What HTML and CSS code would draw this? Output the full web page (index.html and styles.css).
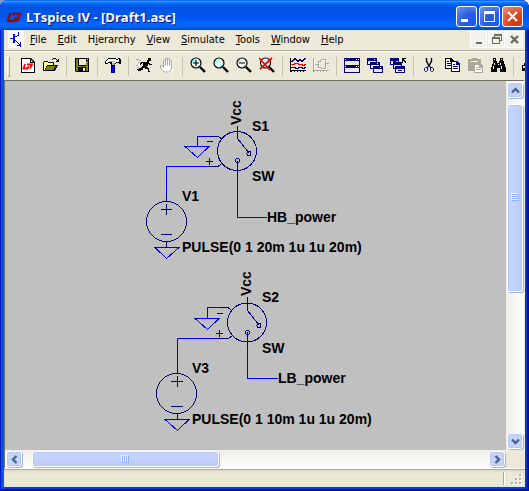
FILE: index.html
```html
<!DOCTYPE html>
<html lang="en">
<head>
<meta charset="utf-8">
<title>LTspice IV - [Draft1.asc]</title>
<link rel="stylesheet" href="styles.css">
</head>
<body>
<div class="window">
  <header class="titlebar">
    <svg class="app-logo" width="16" height="16" viewBox="0 0 16 16" aria-hidden="true">
      <path d="M4.500 3L2 11H8.500L10 7M6.500 4H14L11 11.500" fill="none" stroke="#8c0c14" stroke-width="2.400"/>
    </svg>
    <h1 class="title">LTspice IV - [Draft1.asc]</h1>
    <div class="title-buttons">
      <button class="tb" aria-label="Minimize"><svg width="19" height="19" viewBox="0 0 19 19"><path d="M4 12h7v3H4z" fill="#fff"/></svg></button>
      <button class="tb" aria-label="Maximize"><svg width="19" height="19" viewBox="0 0 19 19"><path d="M4 4h11v11H4zM5 7v7h9V7z" fill="#fff" fill-rule="evenodd"/></svg></button>
      <button class="tb tb-close" aria-label="Close"><svg width="19" height="19" viewBox="0 0 19 19"><path d="M5 5l9 9M14 5l-9 9" stroke="#fff" stroke-width="2.200" fill="none"/></svg></button>
    </div>
  </header>

  <nav class="menubar">
    <svg class="doc-icon" width="16" height="17" viewBox="0 0 16 17" shape-rendering="crispEdges" aria-hidden="true">
      <path d="M0 0h16v17H0z" fill="#fff"/>
      <path d="M2 7h4v1H2zM5 3h2v9H5zM7 5h2v1H7zM9 4h2v1H9zM10 1h1v4h-1zM7 9h1v1H7zM8 10h1v1H8zM9 11h1v1H9zM10 12h1v1h-1zM12 11h1v4H9v-1h2v-1h1zM12 15h1v1h-1z" fill="#00f"/>
    </svg>
    <button class="menu"><u>F</u>ile</button>
    <button class="menu"><u>E</u>dit</button>
    <button class="menu">H<u>i</u>erarchy</button>
    <button class="menu"><u>V</u>iew</button>
    <button class="menu"><u>S</u>imulate</button>
    <button class="menu"><u>T</u>ools</button>
    <button class="menu"><u>W</u>indow</button>
    <button class="menu"><u>H</u>elp</button>
    <div class="mdi-buttons">
      <button class="mdi" aria-label="Minimize document"><svg width="15" height="15" viewBox="0 0 15 15"><path d="M5 10h6v2H5z" fill="#6d6c62"/></svg></button>
      <button class="mdi" aria-label="Restore document"><svg width="15" height="15" viewBox="0 0 15 15" shape-rendering="crispEdges"><path d="M5 2h8v7h-2V8h1V4H6v1H5zM3 5h8v7H3zM4 7v4h6V7z" fill="#6d6c62" fill-rule="evenodd"/></svg></button>
      <button class="mdi" aria-label="Close document"><svg width="15" height="15" viewBox="0 0 15 15"><path d="M4 4l7 7M11 4l-7 7" stroke="#6d6c62" stroke-width="2.400"/></svg></button>
    </div>
  </nav>

  <div class="toolbar" role="toolbar">
    <span class="grip"></span>
    <button class="tool" aria-label="New schematic"><svg viewBox="0 0 16 16"><path d="M1 1h10l4 4v11H1z" fill="#000"/><path d="M2 2h8v4h4v9H2z" fill="#fff"/><path d="M11 3v2h2z" fill="#fff"/><path d="M5 7L3.500 11.500H7.500L8.500 9.500M7 7.500H12L10 11.500" fill="none" stroke="#f00" stroke-width="1.800"/></svg></button>
    <button class="tool" aria-label="Open"><svg viewBox="0 0 16 16"><path d="M0 5h1V4h4v1h6v3h4v1h-1v2h-1v2h-1v1H0z" fill="#000"/><path d="M1 5h4v1h5v2H4v1H3v2H2v2H1z" fill="#ffff80"/><path d="M4 9h9l-3 4H2z" fill="#808000"/><path d="M9 2h1V1h3v1h1v1h1V2h1v3h-3V4h1V3h-1V2h-3v1H9z" fill="#000"/></svg></button>
    <span class="sep"></span>
    <button class="tool" aria-label="Save"><svg viewBox="0 0 16 16"><path d="M1 1h14v14H2l-1-1z" fill="#000"/><path d="M2 2h2v7h8V4h2v10h-2v-4H4v4H2z" fill="#808000"/><path d="M5 2h7v6H5z" fill="#ece9d8"/><path d="M13 2h1v1h-1zM9 11h2v3H9z" fill="#ece9d8"/></svg></button>
    <span class="sep"></span>
    <button class="tool" aria-label="Control panel"><svg viewBox="0 0 16 16" shape-rendering="crispEdges"><path d="M3 1h8v1h2V1h2v1h1v5h-2V6h-3v1h-1v2H6V7H5V6H3v1H0V4h1V3h1V2h1z" fill="#000"/><path d="M3 2h8v1h2V2h1v3h-3v1H7V5H3v1H1V4h1V3h1z" fill="#fff"/><path d="M4 4h6v1H4zM7 6h3v2H7z" fill="#aca899"/><path d="M6 9h4v7H6z" fill="#000080"/><path d="M7 9h2v6H7z" fill="#0000ff"/></svg></button>
    <span class="sep"></span>
    <button class="tool" aria-label="Run"><svg viewBox="0 0 16 16"><path d="M12 1h3v3h-2v2h1v1h2v1h-3V7h-1v2h-1v1h1v1h1v3h1v1h-2v-3H9v-1H7v2H5v1H2v-1H1v-1h2v-1h2v-1h1V9h1V6H6v1H5v1H4V6h1V5h6V3h1z" fill="#000"/><path d="M0 2h3v1h2v1H3V3H0zM2 5h2v1H2zM0 8h2v1H0zM1 10h2v1H1z" fill="#aca899"/></svg></button>
    <button class="tool" aria-label="Halt" disabled><svg viewBox="0 0 16 16"><path d="M5 3h2V2h5v2h2v9l-2 3H6l-4-4V9h2l1 1z" fill="#fff"/><path d="M4.500 11V3.500h2V8.500 1.500h2V8.500 1.500h2V8.500 3.500h2V12l-2 3h-5l-4-4v-2.500h2l1 1.500" stroke="#aca899" fill="none"/></svg></button>
    <span class="sep"></span>
    <button class="tool" aria-label="Zoom area"><svg viewBox="0 0 16 16"><circle cx="6" cy="6" r="5" fill="#f4f4ee" stroke="#000" stroke-width="1.200"/><path d="M2.500 5.500l3-3M8 9.500L9.500 8" stroke="#0ff"/><path d="M3 6h6M6 3v6" stroke="#000" stroke-width="1.200"/><path d="M10 10l5 5" stroke="#000" stroke-width="2.400"/></svg></button>
    <button class="tool" aria-label="Pan"><svg viewBox="0 0 16 16"><circle cx="6" cy="6" r="5" fill="#f4f4ee" stroke="#000" stroke-width="1.200"/><path d="M2.500 6l3.500-3.500M7.500 9.500L9.500 7.500" stroke="#0ff"/><path d="M10 10l5 5" stroke="#000" stroke-width="2.400"/></svg></button>
    <button class="tool" aria-label="Zoom back"><svg viewBox="0 0 16 16"><circle cx="6" cy="6" r="5" fill="#f4f4ee" stroke="#000" stroke-width="1.200"/><path d="M2.500 5l2.500-2.500M7 9.500L9.500 8" stroke="#0ff"/><path d="M3 6h6" stroke="#000" stroke-width="1.200"/><path d="M10 10l5 5" stroke="#000" stroke-width="2.400"/></svg></button>
    <button class="tool" aria-label="Zoom full extents"><svg viewBox="0 0 16 16"><circle cx="6.500" cy="6" r="5" fill="#dff" stroke="#000" stroke-width="1.200"/><path d="M10 10l5 5" stroke="#000" stroke-width="2.400"/><path d="M0 1l11 12M13 1L1 12" stroke="#f00" stroke-width="1.800"/></svg></button>
    <span class="sep"></span>
    <button class="tool" aria-label="Autorange"><svg viewBox="0 0 16 16" shape-rendering="crispEdges"><path d="M0 1h1v12h15v1h-2v1h-1v-1h-2v1h-1v-1H8v1H7v-1H5v1H4v-1H2v1H0z" fill="#000"/><path d="M1 4.500h1v-1h1v-1h1v-1h1v1h1v1h1v1h1v-1h1v-1h1v1h1v1h1v-1h1v-1h1v-1h2M1 10.500h4v1h3v-1h4v1h2v-1h2" fill="none" stroke="#000080"/><path d="M1 7.500h3v-1h4v1h4v1h2v-1h2" fill="none" stroke="#f00"/></svg></button>
    <button class="tool" aria-label="Plot settings" disabled><svg viewBox="0 0 16 16" shape-rendering="crispEdges"><path d="M1 2h1v12h15v1H2v1H1zM6 5h1v7H6zM9 3h5v1H9zM13 4h1v8h-1zM9 12h5v1H9z" fill="#fff"/><path d="M0 1h1v12h15v1h-2v1h-1v-1h-2v1h-1v-1H8v1H7v-1H5v1H4v-1H2v1H0zM5 4h1v3H5zM2 7h4v1H2zM5 8h1v3H5zM6 4h2v1H6zM8 2h5v1H8zM7 3h1v1H7zM12 3h1v8h-1zM8 11h5v1H8zM6 10h2v1H6zM13 6h3v1h-3z" fill="#aca899"/></svg></button>
    <span class="sep"></span>
    <button class="tool" aria-label="Tile windows"><svg viewBox="0 0 16 16"><path d="M0 1h16v15H0z" fill="#000080"/><path d="M1 4h14v4H1zM1 11h14v4H1z" fill="#ece9d8"/><path d="M1 2h1v1H1zM12 2h1v1h-1zM14 2h1v1h-1zM1 9h1v1H1zM12 9h1v1h-1zM14 9h1v1h-1z" fill="#fff"/></svg></button>
    <button class="tool" aria-label="Cascade windows"><svg viewBox="0 0 16 16"><path d="M0 1h10v7H0zM3 5h10v7H3zM6 9h10v7H6z" fill="#000080"/><path d="M1 4h8v1H3v2H1zM4 8h8v1H6v2H4zM7 12h8v3H7z" fill="#ece9d8"/><path d="M7 2h1v1H7zM10 6h1v1h-1zM13 10h1v1h-1z" fill="#fff"/><path d="M1 2h1v1H1z" fill="#f00"/></svg></button>
    <button class="tool" aria-label="Close windows"><svg viewBox="0 0 16 16"><path d="M0 1h9v7H0zM3 5h9v7H3zM5 9h10v7H5z" fill="#000080"/><path d="M1 4h7v1H3v2H1zM4 8h7v1H5v2H4zM6 12h8v3H6z" fill="#ece9d8"/><path d="M8 13h4v1H8zM3 4h3v1H3z" fill="#000"/><path d="M12 1h4v1h-2v1h1v1h1v2h-1V5h-1V4h-1v2h-1z" fill="#000"/></svg></button>
    <span class="sep"></span>
    <button class="tool" aria-label="Cut"><svg viewBox="0 0 16 16"><path d="M5.500 1v3l3 6M10.500 1v3l-3 6" stroke="#000" stroke-width="1.400" fill="none"/><path d="M7.500 8.500l-1 2h-2l-1 1v2l1 1h1l1-1v-3M8.500 8.500l1 2h2l1 1v2l-1 1h-1l-1-1v-3" stroke="#000080" fill="none"/></svg></button>
    <button class="tool" aria-label="Copy"><svg viewBox="0 0 16 16" shape-rendering="crispEdges"><path d="M1 1h6l3 3v8H1z" fill="#000"/><path d="M2 2h4v3h3v6H2z" fill="#fff"/><path d="M3 4h2v1H3zM3 6h5v1H3zM3 8h5v1H3z" fill="#000"/><path d="M7 4h6l3 3v8H7z" fill="#000080"/><path d="M8 5h4v3h3v6H8z" fill="#fff"/><path d="M9 7h2v1H9zM9 9h5v1H9zM9 11h5v1H9z" fill="#000080"/></svg></button>
    <button class="tool" aria-label="Paste" disabled><svg viewBox="0 0 16 16" shape-rendering="crispEdges"><path d="M1 2h4V1h5v1h4v5h1v1h1v8H7v-2H1z" fill="#aca899"/><path d="M4 4h7v1H4zM8 8h4v3h3v4H8z" fill="#fff"/><path d="M9 10h2v1H9zM9 12h5v1H9z" fill="#aca899"/></svg></button>
    <button class="tool" aria-label="Find"><svg viewBox="0 0 16 16" shape-rendering="crispEdges"><path d="M3 1h3v3h1v2h2V4h1V1h3v3h1v3h1v3h1v5h-6v-4H7v4H1v-5h1V7h1V4z" fill="#000"/><path d="M4 2h1v1H4zM11 2h1v1h-1zM4 6h1v2H4zM3 9h1v3H3zM10 6h1v2h-1zM11 9h1v3h-1zM8 7h1v1H8z" fill="#fff"/></svg></button>
    <span class="sep"></span>
    <button class="tool" aria-label="Print"><svg viewBox="0 0 16 16" shape-rendering="crispEdges"><path d="M3 6h1V3h10v3h1v2h1v6H1V8h2z" fill="#000"/><path d="M5 4h8v3H4V6h1zM2 9h12v2H2z" fill="#ece9d8"/></svg></button>
  </div>

  <main class="work">
    <div class="sheet">
      <svg class="schematic" width="500" height="368" viewBox="5 81 500 368" role="img" aria-label="Schematic with two switched pulse sources">
        <g class="wire">
          <path d="M210 136.500H197.500V147M208 166.500H166.500V196M237.500 176V217.500H267"/>
          <path d="M220 307.500H207.500V318M217 338.500H177.500V368M247.500 348V378.500H278"/>
          <path d="M185 146.500H209L197.500 157.500ZM155 247.500H179L166.500 258.500ZM195 318.500H219L207.500 329.500ZM165 419.500H189L177.500 430.500Z"/>
        </g>
        <g class="part">
          <circle cx="237" cy="151" r="19.500"/><circle cx="249" cy="153.500" r="2"/><circle cx="237.500" cy="160.500" r="2"/>
          <path d="M237.500 126V138.500L249 153M237.500 161V176M210 136.500H218L222 139M208 166.500H218L222 163.500M207 141.500H213M206 161.500H213M209.500 158V165"/>
          <circle cx="166.500" cy="221.500" r="20"/>
          <path d="M166.500 196V202M161 209.500H172M166.500 204V215M161 234.500H172M166.500 241V247"/>
          <circle cx="247" cy="322.500" r="19.500"/><circle cx="259" cy="325.500" r="2"/><circle cx="247.500" cy="332.500" r="2"/>
          <path d="M247.500 297V310.500L259 325M247.500 332V348M220 307.500H228L232 310.500M217 338.500H228L232 336M217 313.500H223M216 333.500H223M219.500 330V337"/>
          <circle cx="176.500" cy="393.500" r="20"/>
          <path d="M177.500 368V374M171 381.500H183M177.500 376V387M171 406.500H183M177.500 413V419"/>
        </g>
        <g class="label">
          <text transform="translate(241 125) rotate(-90)">Vcc</text>
          <text x="252" y="131">S1</text>
          <text x="252" y="181">SW</text>
          <text x="182" y="201">V1</text>
          <text x="267" y="222">HB_power</text>
          <text x="182" y="252">PULSE(0 1 20m 1u 1u 20m)</text>
          <text transform="translate(251 296) rotate(-90)">Vcc</text>
          <text x="262" y="302">S2</text>
          <text x="262" y="353">SW</text>
          <text x="192" y="373">V3</text>
          <text x="278" y="383">LB_power</text>
          <text x="192" y="424">PULSE(0 1 10m 1u 1u 20m)</text>
        </g>
      </svg>
    </div>
    <div class="scroll scroll-v">
      <button class="arrow" aria-label="Scroll up"><svg viewBox="0 0 9 9"><path d="M1 6.500L4.500 3 8 6.500"/></svg></button>
      <div class="track"><div class="thumb"><i></i><i></i><i></i><i></i></div></div>
      <button class="arrow" aria-label="Scroll down"><svg viewBox="0 0 9 9"><path d="M1 2.500L4.500 6 8 2.500"/></svg></button>
    </div>
    <div class="scroll scroll-h">
      <button class="arrow" aria-label="Scroll left"><svg viewBox="0 0 9 9"><path d="M6.500 1L3 4.500 6.500 8"/></svg></button>
      <div class="track"><div class="thumb"><i></i><i></i><i></i><i></i></div></div>
      <button class="arrow" aria-label="Scroll right"><svg viewBox="0 0 9 9"><path d="M2.500 1L6 4.500 2.500 8"/></svg></button>
    </div>
    <div class="corner"></div>
  </main>

  <footer class="status">
    <span class="status-line"></span>
    <svg width="18" height="14" viewBox="0 0 18 14" shape-rendering="crispEdges" aria-hidden="true">
      <path d="M13 2h2v2h-2zM9 6h2v2H9zM13 6h2v2h-2zM5 10h2v2H5zM9 10h2v2H9zM13 10h2v2h-2z" fill="#fff"/>
      <path d="M12 1h2v2h-2zM8 5h2v2H8zM12 5h2v2h-2zM4 9h2v2H4zM8 9h2v2H8zM12 9h2v2h-2z" fill="#b8b4a3"/>
    </svg>
  </footer>
</div>
</body>
</html>
```
FILE: styles.css
```css
* { box-sizing: border-box; }

body {
  margin: 0;
  background: linear-gradient(90deg, #7f9fc4, #eef1f8);
  font-family: "DejaVu Sans Condensed", "Noto Sans", sans-serif;
  font-size: 11px;
  color: #000;
}

button {
  margin: 0;
  padding: 0;
  border: 0;
  background: none;
  font: inherit;
  color: inherit;
}

svg { display: block; flex: none; }

.window {
  display: flex;
  flex-direction: column;
  height: 100vh;
  padding: 0 4px 4px;
  overflow: hidden;
  border-radius: 8px 8px 0 0;
  background: #ece9d8;
  box-shadow: inset 1px 0 #0019cf, inset -2px 0 #001094, inset 0 -2px #001094,
    inset 4px 0 #0855dd, inset -4px 0 #0138d8, inset 0 -4px #0441d8;
}

/* Title bar */
.titlebar {
  display: flex;
  flex: none;
  align-items: center;
  gap: 4px;
  height: 30px;
  margin: 0 -4px;
  padding: 3px 6px 0;
  background: linear-gradient(#0058ee 0%, #3593ff 5%, #127dff 8%, #0262ee 14%,
    #0054e3 24%, #0055eb 56%, #005bf5 66%, #026afe 80%, #0062ef 90%, #0046c0 100%);
}

.app-logo { margin-top: 2px; }

.title {
  flex: 1;
  margin: 0;
  font: bold 13px "Open Sans", "Noto Sans", sans-serif;
  color: #fff;
  text-shadow: 1px 1px #0f1089;
}

.title-buttons { display: flex; gap: 2px; }

.tb {
  width: 21px;
  height: 21px;
  border: 1px solid #fff;
  border-radius: 3px;
  background: radial-gradient(circle at 80% 90%, #1a5cf0, #2a5ce0 45%, #7596f0);
}

.tb-close { background: radial-gradient(circle at 80% 90%, #cc3a10, #da4a28 50%, #ef9a84); }

/* Menu bar */
.menubar {
  display: flex;
  flex: none;
  align-items: center;
  height: 22px;
  padding: 0 2px 2px 4px;
  border-bottom: 1px solid #fff;
  box-shadow: inset 0 -1px #aca899;
}

.doc-icon { margin-right: 1px; }

.menu { padding: 0 6px 0 5px; }

.mdi-buttons { display: flex; gap: 1px; margin-left: auto; }

.mdi {
  width: 17px;
  height: 17px;
  border: 1px solid #fff;
  background: #f3f2ea;
}

/* Toolbar */
.toolbar {
  display: flex;
  flex: none;
  align-items: center;
  height: 28px;
  overflow: hidden;
}

.grip {
  flex: none;
  width: 3px;
  height: 21px;
  margin: 0 7px 0 3px;
  border: 1px solid;
  border-color: #fff #aca899 #aca899 #fff;
}

.tool { flex: none; width: 23px; padding: 0 4px 2px 3px; }
.tool svg { width: 16px; height: 16px; }

.sep {
  flex: none;
  width: 1px;
  height: 19px;
  margin: 0 4px 0 3px;
  background: #c5c2b0;
}

/* Drawing sheet and its scroll bars */
.work {
  display: grid;
  flex: 1;
  grid-template: minmax(0, 1fr) 18px / minmax(0, 1fr) 18px;
  min-height: 0;
  margin-right: 1px;
  border: solid #716f64;
  border-width: 1px 0 0 1px;
  border-bottom: 1px solid #fff;
}

.sheet { overflow: hidden; background: #c0c0c0; }

.wire, .part { fill: none; stroke-width: 1; shape-rendering: crispEdges; }
.wire { stroke: #00f; }
.part { stroke: #000080; }
.label { font: bold 14px "Liberation Sans", Arial, sans-serif; }

.scroll {
  display: flex;
  padding: 1px;
  background: #f6f5f0;
}

.scroll-v { flex-direction: column; background: linear-gradient(90deg, #efeee8, #fefefb); }
.scroll-h { background: linear-gradient(#efeee8, #fefefb); }

.arrow, .thumb {
  display: flex;
  flex: none;
  align-items: center;
  justify-content: center;
  border: 1px solid #fff;
  border-radius: 3px;
  background: #c3d3fd;
  box-shadow: inset 0 0 0 1px #b5c8f7, 1px 1px #a0b5e0;
}

.arrow { width: 16px; height: 16px; }
.arrow svg { width: 9px; height: 9px; }
.arrow path { fill: none; stroke: #4d6185; stroke-width: 2.400; }

.track { display: flex; flex: 1; }
.scroll-v .track { flex-direction: column; }

.scroll-v .thumb {
  flex-direction: column;
  gap: 1px;
  width: 16px;
  height: 56%;
  margin-top: 6px;
  background: linear-gradient(90deg, #c9d7fd, #b9cbf8);
}

.scroll-h .thumb {
  gap: 1px;
  width: 40%;
  height: 16px;
  margin-left: 10px;
  background: linear-gradient(#c9d7fd, #b9cbf8);
}

.thumb i { background: #8cb0f8; }
.scroll-v i { width: 7px; height: 1px; box-shadow: -1px -1px #eef4fe; }
.scroll-h i { width: 1px; height: 7px; box-shadow: -1px -1px #eef4fe; }

.corner { background: #ece9d8; }

/* Status bar */
.status {
  display: flex;
  flex: none;
  align-items: flex-end;
  justify-content: flex-end;
  height: 18px;
  border-top: 1px solid #aca899;
  background: linear-gradient(#dedbc9, #ece9d8 4px, #e8e5d2);
}

.status-line {
  width: 2px;
  height: 13px;
  margin: 0 2px 2px 0;
  border-left: 1px solid #aca899;
  border-right: 1px solid #fff;
}
```
